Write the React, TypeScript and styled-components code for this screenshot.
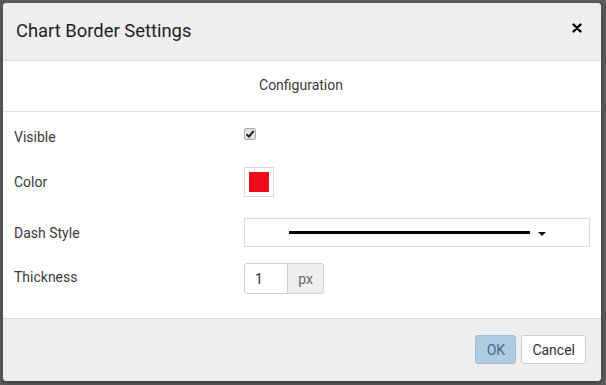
import styled, { createGlobalStyle } from 'styled-components'

const GlobalStyle = createGlobalStyle`
	html, body {
		margin: 0;
		padding: 0;
		background: #5e5e5e;
		font-family: Roboto, "Liberation Sans", sans-serif;
	}
	* { box-sizing: border-box; }
`
const Backdrop = styled.div`
	width: 606px;
	height: 385px;
	padding: 3px 5px 4px 3px;
	background: #5e5e5e;
`
const Dialog = styled.div`
	width: 598px;
	height: 378px;
	display: flex;
	flex-direction: column;
	background: #fff;
	border-radius: 4px;
	overflow: hidden;
	box-shadow: 0 2px 6px rgba(0, 0, 0, 0.4);
`
const Header = styled.div`
	height: 58px;
	flex-shrink: 0;
	display: flex;
	justify-content: space-between;
	align-items: center;
	padding: 0 19px 8px 13px;
	background: #eeeeee;
	border-bottom: 1px solid #dcdcdc;
`
const Title = styled.h1`
	margin: 6px 0 0;
	font-size: 18.4px;
	font-weight: 400;
	color: #1e1e1e;
`
const CloseButton = styled.button`
	border: none;
	background: none;
	padding: 0;
	width: 10px;
	height: 10px;
	display: flex;
	cursor: pointer;
`
const Body = styled.div`
	flex: 1;
	display: flex;
	flex-direction: column;
`
const SectionTitle = styled.div`
	height: 51px;
	display: flex;
	align-items: center;
	justify-content: center;
	font-size: 14px;
	color: #3a3a3a;
	border-bottom: 1px solid #dedede;
	padding: 0 2px 2px 0;
`
const Form = styled.div`
	display: flex;
	flex-direction: column;
	padding: 9px 11px 0 11px;
`
const Row = styled.div<{ $height: number; $gap: number }>`
	display: grid;
	grid-template-columns: 230px 1fr;
	align-items: center;
	height: ${(p) => p.$height}px;
	margin-bottom: ${(p) => p.$gap}px;
`
const Label = styled.span<{ $shift?: number }>`
	font-size: 14px;
	color: #3a3a3a;
	margin-top: ${(p) => p.$shift ?? 0}px;
`
const CheckBox = styled.span`
	width: 12px;
	height: 12px;
	margin-top: -4px;
	border: 1px solid #a9a9a9;
	border-radius: 2px;
	background: #e4e4e4;
	display: flex;
	align-items: center;
	justify-content: center;
`
const Swatch = styled.div`
	width: 30px;
	height: 30px;
	border: 1px solid #d9d9d9;
	padding: 4px;
	background: #fff;
`
const SwatchFill = styled.div<{ $color: string }>`
	width: 100%;
	height: 100%;
	background: ${(p) => p.$color};
`
const Select = styled.div`
	width: 346px;
	height: 29px;
	border: 1px solid #dadada;
	display: flex;
	align-items: center;
	padding: 0 0 0 44px;
`
const DashLine = styled.div`
	width: 241px;
	height: 3px;
	background: #000;
`
const Caret = styled.span`
	margin-left: 8px;
	margin-top: 3px;
	width: 0;
	height: 0;
	border-left: 4px solid transparent;
	border-right: 4px solid transparent;
	border-top: 4px solid #111;
`
const InputGroup = styled.div`
	display: flex;
	height: 31px;
`
const NumberBox = styled.div`
	width: 44px;
	border: 1px solid #cfcfcf;
	border-radius: 3px 0 0 3px;
	display: flex;
	align-items: center;
	padding-left: 10px;
	font-size: 14px;
	color: #333;
`
const Addon = styled.div`
	width: 36px;
	border: 1px solid #cfcfcf;
	border-left: none;
	border-radius: 0 3px 3px 0;
	background: #eeeeee;
	display: flex;
	align-items: center;
	justify-content: center;
	font-size: 14px;
	color: #666;
`
const Footer = styled.div`
	height: 63px;
	flex-shrink: 0;
	display: flex;
	justify-content: flex-end;
	align-items: flex-start;
	gap: 5px;
	padding: 16px 15px 0 0;
	background: #eeeeee;
	border-top: 1px solid #dcdcdc;
`
const Button = styled.button<{ $primary?: boolean }>`
	height: 29px;
	padding: 0 10px;
	font-family: inherit;
	font-size: 14px;
	border-radius: 3px;
	border: 1px solid ${(p) => (p.$primary ? '#9cbdd6' : '#cccccc')};
	background: ${(p) => (p.$primary ? '#afcbdf' : '#fff')};
	color: ${(p) => (p.$primary ? '#3e6c96' : '#333')};
	min-width: ${(p) => (p.$primary ? '41px' : '64px')};
`

export default function App() {
	return (
		<>
			<GlobalStyle />
			<Backdrop>
				<Dialog>
					<Header>
						<Title>Chart Border Settings</Title>
						<CloseButton aria-label="Close">
							<svg width="10" height="10" viewBox="0 0 10 10">
								<path d="M1.5 1.5 L8.5 8.5 M8.5 1.5 L1.5 8.5" stroke="#000" strokeWidth="2.4" strokeLinecap="round" />
							</svg>
						</CloseButton>
					</Header>
					<Body>
						<SectionTitle>Configuration</SectionTitle>
						<Form>
							<Row $height={30} $gap={16}>
								<Label $shift={2}>Visible</Label>
								<CheckBox>
									<svg width="10" height="10" viewBox="0 0 10 10">
										<path d="M1.5 5.2 L4 7.6 L8.6 2" stroke="#222" strokeWidth="2" fill="none" />
									</svg>
								</CheckBox>
							</Row>
							<Row $height={30} $gap={21}>
								<Label>Color</Label>
								<Swatch>
									<SwatchFill $color="#ed0a1c" />
								</Swatch>
							</Row>
							<Row $height={29} $gap={16}>
								<Label>Dash Style</Label>
								<Select>
									<DashLine />
									<Caret />
								</Select>
							</Row>
							<Row $height={31} $gap={0}>
								<Label $shift={-3}>Thickness</Label>
								<InputGroup>
									<NumberBox>1</NumberBox>
									<Addon>px</Addon>
								</InputGroup>
							</Row>
						</Form>
					</Body>
					<Footer>
						<Button $primary>OK</Button>
						<Button>Cancel</Button>
					</Footer>
				</Dialog>
			</Backdrop>
		</>
	)
}
